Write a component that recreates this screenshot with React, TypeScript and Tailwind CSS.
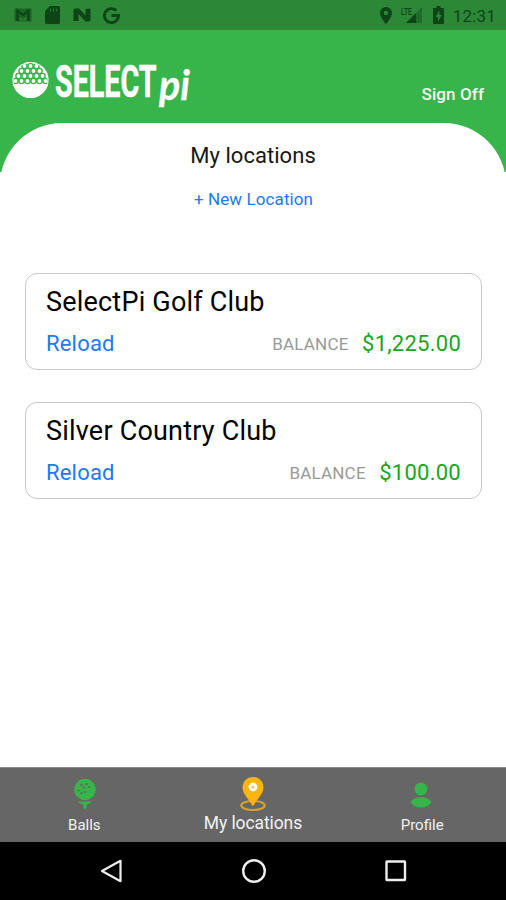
import React from 'react';

interface ClubLocation {
    id: number;
    name: string;
    balance: number;
}

const locations: ClubLocation[] = [
    { id: 1, name: 'SelectPi Golf Club', balance: 1225 },
    { id: 2, name: 'Silver Country Club', balance: 100 },
];

const formatBalance = (value: number) =>
    `$${value.toLocaleString('en-US', { minimumFractionDigits: 2 })}`;

// Rows of dimples on the upper part of the golf ball
const dimpleRows = [
    { y: 66, xs: [24.5, 30.5, 36.5] },
    { y: 71, xs: [21.5, 27.5, 33.5, 39.5] },
    { y: 76, xs: [18.5, 24.5, 30.5, 36.5, 42.5] },
    { y: 81, xs: [15.5, 21.5, 27.5, 33.5, 39.5, 45.5] },
];

const StatusBar: React.FC = () => (
    <div className="flex h-[30px] items-center justify-between bg-[#2c8737] pl-[14px] pr-[10px] text-[#0d4517]">
        <div className="flex items-center">
            <svg className="h-[14px] w-[18px]" viewBox="0 0 18 14">
                <rect x="0.5" y="0.5" width="17" height="13" rx="1" fill="currentColor" opacity="0.55" />
                <path d="M3.500 13V2.500L9 7l5.500-4.500V13" fill="none" stroke="currentColor" strokeWidth="2.2" />
                <path d="M5.500 12.500V9L9 11l3.500-2v3.500z" fill="#2c8737" opacity="0.7" />
            </svg>
            <svg className="ml-[13px] h-[18px] w-[15px]" viewBox="0 0 15 18">
                <path d="M5 0h8.500a1.500 1.500 0 0 1 1.500 1.500v15a1.500 1.500 0 0 1-1.500 1.500H1.500A1.500 1.500 0 0 1 0 16.500V5z" fill="currentColor" />
                <path d="M5.500 2.500v3M8.500 2.500v3M11.500 2.500v3" stroke="#2c8737" strokeWidth="0.800" />
            </svg>
            <svg className="ml-[13px] h-[14px] w-[18px]" viewBox="0 0 18 14">
                <path d="M0.500 13V1.500L2 0.500h4l6.500 7V1L17.500 0.500v12L16 13.500h-3.500L5.500 6v7z" fill="currentColor" />
            </svg>
            <svg className="ml-[12px] h-[17px] w-[17px]" viewBox="0 0 17 17">
                <path d="M13.400 3.600A7 7 0 1 0 15.500 8.500H8.500" fill="none" stroke="currentColor" strokeWidth="2.800" />
            </svg>
        </div>
        <div className="flex items-center">
            <svg className="h-[17px] w-[12px]" viewBox="0 0 12 17">
                <path fillRule="evenodd" d="M6 0a6 6 0 0 1 6 6c0 4.500-6 11-6 11S0 10.500 0 6a6 6 0 0 1 6-6zm0 3.700a2.200 2.200 0 1 0 0 4.400 2.200 2.200 0 0 0 0-4.400z" fill="currentColor" />
            </svg>
            <svg className="ml-[8px] h-[18px] w-[23px] overflow-visible" viewBox="0 0 23 18">
                <path d="M22 1v16H6z" fill="currentColor" opacity="0.4" />
                <path d="M16 7v10H6z" fill="currentColor" />
                <text x="1" y="8.500" className="font-['Roboto',sans-serif] text-[9px] font-medium" textLength="11" lengthAdjust="spacingAndGlyphs" fill="currentColor">LTE</text>
            </svg>
            <svg className="ml-[10px] h-[18px] w-[11px]" viewBox="0 0 11 18">
                <path d="M3.500 0h4v2H11v16H0V2h3.500z" fill="currentColor" />
                <path d="M6.500 4.500L2.500 11H5v4.500L8.800 9H6.200z" fill="#2c8737" />
            </svg>
            <span className="ml-[9px] pt-[2px] text-[17px] leading-none tracking-[0.2px]">12:31</span>
        </div>
    </div>
);

const Logo: React.FC = () => (
    <svg className="h-[70px] w-[186px] overflow-visible" viewBox="12 46 186 70">
        <circle cx="30.500" cy="80" r="18" fill="#fff" />
        <g fill="#fff" stroke="#37b44a" strokeWidth="1.400">
            {dimpleRows.map((row) =>
                row.xs.map((x) => <circle key={`${row.y}-${x}`} cx={x} cy={row.y} r="2.600" />)
            )}
        </g>
        <circle cx="30.500" cy="80" r="17.500" fill="none" stroke="#fff" strokeWidth="1" />
        <text x="55" y="96.500" className="font-['Roboto',sans-serif] text-[44px] font-bold" textLength="101.500" lengthAdjust="spacingAndGlyphs" fill="#fff" stroke="#fff" strokeWidth="0.600">SELECT</text>
        <text x="159" y="99.500" className="font-['Lato',sans-serif] text-[42px] font-bold italic" textLength="31" lengthAdjust="spacingAndGlyphs" fill="#fff" stroke="#fff" strokeWidth="0.300">pi</text>
    </svg>
);

const LocationCard: React.FC<{ location: ClubLocation }> = ({ location }) => (
    <div className="h-[97px] rounded-[12px] border-[1.5px] border-[#c8c8c8] px-[20px] pt-[12px]">
        <h2 className="text-[27px] leading-[32px] tracking-[0.2px] text-black">{location.name}</h2>
        <div className="mt-[12px] flex items-center justify-between leading-[28px]">
            <button className="text-[22px] tracking-[0.2px] text-[#2079f5]">Reload</button>
            <div className="flex items-center">
                <span className="text-[17px] tracking-[0.2px] text-[#999]">BALANCE</span>
                <span className="ml-[13.5px] text-[22px] tracking-[0.25px] text-[#18a51f]">{formatBalance(location.balance)}</span>
            </div>
        </div>
    </div>
);

const TabBar: React.FC = () => (
    <div className="grid h-[75px] grid-cols-3 border-t border-[#8c8c8c] bg-[#666] text-[#f2f2f2]">
        <div className="flex flex-col items-center pt-[10px]">
            <svg className="ml-[2px] h-[32px] w-[24px]" viewBox="0 0 24 32">
                <circle cx="12" cy="11.500" r="10.700" fill="#37b44a" />
                <g fill="#666">
                    <circle cx="8.500" cy="7" r="1.200" />
                    <circle cx="13.500" cy="6" r="1.200" />
                    <circle cx="11" cy="9.500" r="1.100" />
                    <circle cx="16" cy="9" r="1.100" />
                    <circle cx="5.500" cy="12.500" r="1.100" />
                    <circle cx="8.500" cy="15" r="1.100" />
                    <circle cx="12" cy="14" r="1.100" />
                </g>
                <path d="M5.500 23.500h13v1.300l-4.500 1.700-1.200 4.500h-1.600L10 26.500l-4.500-1.700z" fill="#37b44a" />
            </svg>
            <span className="mt-[6px] text-[15px] leading-[18px]">Balls</span>
        </div>
        <div className="flex flex-col items-center pt-[8px]">
            <svg className="h-[36px] w-[28px]" viewBox="0 0 28 36">
                <ellipse cx="14" cy="29.500" rx="11.700" ry="4.500" fill="none" stroke="#d3a235" strokeWidth="2.200" />
                <path d="M14 1c6 0 10.500 4.700 10.500 10.500C24.500 18 18 23 14.800 29.500h-1.600C10 23 3.500 18 3.500 11.500 3.500 5.700 8 1 14 1z" fill="#f9b410" />
                <circle cx="14" cy="11" r="3" fill="#f9c860" stroke="#fff" strokeWidth="2.800" />
            </svg>
            <span className="mt-px text-[17.500px] leading-[20px] tracking-[-0.1px]">My locations</span>
        </div>
        <div className="flex flex-col items-center pt-[13px]">
            <svg className="mr-[2px] h-[29px] w-[22px]" viewBox="0 0 22 29">
                <circle cx="11" cy="8" r="6.500" fill="#37b44a" />
                <path d="M0.500 21c2.500-3.500 6-5 10.500-5s8 1.500 10.500 5c-2.500 3.700-6 5.500-10.500 5.500S3 24.700 0.500 21z" fill="#37b44a" />
            </svg>
            <span className="ml-px mt-[6px] text-[15px] leading-[18px]">Profile</span>
        </div>
    </div>
);

const SystemNav: React.FC = () => (
    <div className="flex h-[58px] items-center justify-between bg-black px-[99px]">
        <svg className="h-[24px] w-[24px]" viewBox="0 0 24 24" fill="none" stroke="#eee" strokeWidth="2.200" strokeLinejoin="round">
            <path d="M21.500 1.800v20.400L3 12z" />
        </svg>
        <svg className="mr-px h-[26px] w-[26px]" viewBox="0 0 26 26" fill="none" stroke="#eee" strokeWidth="2.400">
            <circle cx="13" cy="13" r="10.800" />
        </svg>
        <svg className="h-[22px] w-[22px]" viewBox="0 0 22 22" fill="none" stroke="#eee" strokeWidth="2.400">
            <rect x="1.500" y="1.500" width="18.500" height="18.500" rx="0.500" />
        </svg>
    </div>
);

const App: React.FC = () => {
    return (
        <div className="flex h-[900px] w-[506px] flex-col overflow-hidden bg-white font-['Roboto',sans-serif]">
            <StatusBar />

            {/* Header */}
            <header className="h-[142px] bg-[#37b44a]">
                <div className="flex h-[93px] items-start justify-between pl-[12px] pr-[22px] pt-[16px]">
                    <Logo />
                    <button className="mt-[38px] text-[17px] font-medium leading-[20px] tracking-[0.1px] text-[#f2fbf3]">Sign Off</button>
                </div>
                <div className="h-[49px] overflow-hidden">
                    <div className="h-[124px] rounded-t-[62px] bg-white pt-[20px] text-center">
                        <h1 className="text-[22px] leading-[26px] tracking-[0.05px] text-[#161616]">My locations</h1>
                    </div>
                </div>
            </header>

            <main className="flex flex-1 flex-col pl-[25px] pr-[24px]">
                <button className="mt-[17px] text-[17px] leading-[20px] tracking-[0.1px] text-[#2079f5]">+ New Location</button>
                <div className="mt-[64px] flex flex-col gap-8">
                    {locations.map((location) => (
                        <LocationCard key={location.id} location={location} />
                    ))}
                </div>
            </main>

            <TabBar />
            <SystemNav />
        </div>
    );
};

export default App;
